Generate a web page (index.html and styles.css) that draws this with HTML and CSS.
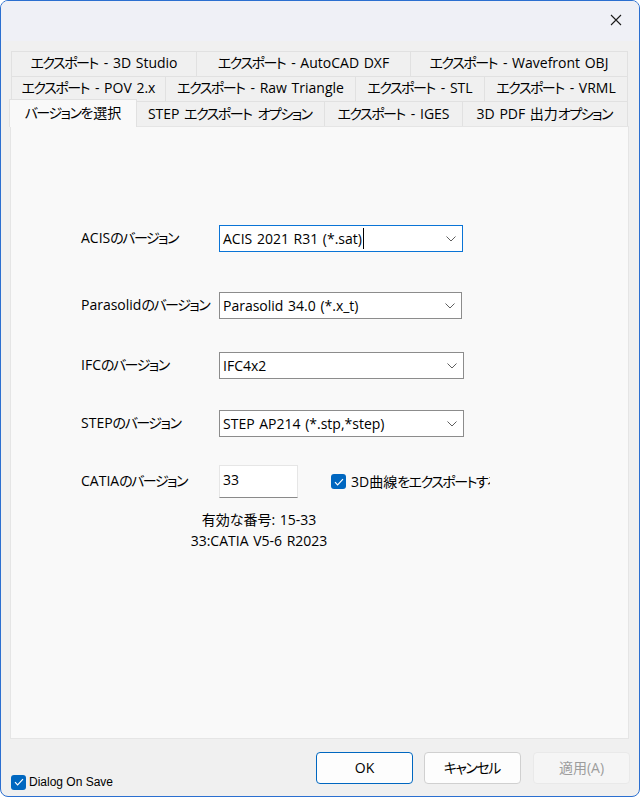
FILE: index.html
```html
<!DOCTYPE html>
<html lang="ja">
<head>
<meta charset="utf-8">
<title>エクスポート</title>
<link rel="stylesheet" href="styles.css">
</head>
<body>
<div class="window">
  <div class="titlebar">
    <div class="close">
      <svg width="12" height="12" viewBox="0 0 12 12"><path d="M1 1L11 11M11 1L1 11" stroke="#1b1b1b" stroke-width="1.1" fill="none"/></svg>
    </div>
  </div>

  <div class="tabs">
    <div class="tabrow r1">
      <div class="tab"><span><span class="kana">エクスポート</span> - 3D Studio</span></div>
      <div class="tab"><span><span class="kana">エクスポート</span> - AutoCAD DXF</span></div>
      <div class="tab"><span><span class="kana">エクスポート</span> - Wavefront OBJ</span></div>
    </div>
    <div class="tabrow r2">
      <div class="tab"><span><span class="kana">エクスポート</span> - POV 2.x</span></div>
      <div class="tab"><span><span class="kana">エクスポート</span> - Raw Triangle</span></div>
      <div class="tab"><span><span class="kana">エクスポート</span> - STL</span></div>
      <div class="tab"><span><span class="kana">エクスポート</span> - VRML</span></div>
    </div>
    <div class="tabrow r3">
      <div class="tab selected"><span><span class="kana">バージョンを</span>選択</span></div>
      <div class="tab"><span>STEP <span class="kana">エクスポート</span> <span class="kana">オプション</span></span></div>
      <div class="tab"><span><span class="kana">エクスポート</span> - IGES</span></div>
      <div class="tab"><span>3D PDF 出力<span class="kana">オプション</span></span></div>
    </div>
  </div>

  <div class="panel">
    <div class="form">
      <div class="row row-acis">
        <div class="lbl">ACIS<span class="kana">のバージョン</span></div>
        <div class="combo focused">
          <span class="val">ACIS 2021 R31 (*.sat)<span class="caret"></span></span>
          <svg class="chev" width="10" height="6" viewBox="0 0 10 6"><path d="M0.5 0.5L5 5L9.5 0.5" stroke="#5f5f5f" stroke-width="1" fill="none"/></svg>
        </div>
      </div>
      <div class="row row-parasolid">
        <div class="lbl">Parasolid<span class="kana">のバージョン</span></div>
        <div class="combo w243">
          <span class="val">Parasolid 34.0 (*.x_t)</span>
          <svg class="chev" width="10" height="6" viewBox="0 0 10 6"><path d="M0.5 0.5L5 5L9.5 0.5" stroke="#5f5f5f" stroke-width="1" fill="none"/></svg>
        </div>
      </div>
      <div class="row row-ifc">
        <div class="lbl">IFC<span class="kana">のバージョン</span></div>
        <div class="combo w245">
          <span class="val">IFC4x2</span>
          <svg class="chev" width="10" height="6" viewBox="0 0 10 6"><path d="M0.5 0.5L5 5L9.5 0.5" stroke="#5f5f5f" stroke-width="1" fill="none"/></svg>
        </div>
      </div>
      <div class="row row-step">
        <div class="lbl">STEP<span class="kana">のバージョン</span></div>
        <div class="combo w245">
          <span class="val">STEP AP214 (*.stp,*step)</span>
          <svg class="chev" width="10" height="6" viewBox="0 0 10 6"><path d="M0.5 0.5L5 5L9.5 0.5" stroke="#5f5f5f" stroke-width="1" fill="none"/></svg>
        </div>
      </div>
      <div class="row row-catia">
        <div class="lbl">CATIA<span class="kana">のバージョン</span></div>
        <div class="textbox">33</div>
        <div class="check">
          <svg width="10" height="8" viewBox="0 0 10 8"><path d="M1 4.2L3.6 6.8L9 1.2" stroke="#fff" stroke-width="1.2" fill="none"/></svg>
        </div>
        <div class="check-label">3D曲線<span class="kana">をエクスポートする</span></div>
      </div>
      <div class="hint">
        <div>有効<span class="kana">な</span>番号: 15-33</div>
        <div>33:CATIA V5-6 R2023</div>
      </div>
    </div>
  </div>

  <div class="footer">
    <div class="save-opt">
      <div class="check">
        <svg width="10" height="8" viewBox="0 0 10 8"><path d="M1 4.2L3.6 6.8L9 1.2" stroke="#fff" stroke-width="1.2" fill="none"/></svg>
      </div>
      <span class="save-label">Dialog On Save</span>
    </div>
    <div class="buttons">
      <div class="btn default">OK</div>
      <div class="btn"><span class="kana">キャンセル</span></div>
      <div class="btn disabled">適用(A)</div>
    </div>
  </div>
</div>
</body>
</html>
```

FILE: styles.css
```css
* { box-sizing: border-box; }
html, body { margin: 0; padding: 0; }
body {
  width: 640px;
  height: 797px;
  background: #ffffff;
  font-family: "Open Sans", "Noto Sans CJK JP", sans-serif;
  font-size: 14px;
  line-height: 18px;
  word-spacing: 1px;
  color: #000;
  font-feature-settings: "palt" 1;
}
.kana {
  letter-spacing: -1.5px;
  margin-right: 1.5px;
}

.window {
  width: 640px;
  height: 797px;
  border: 1px solid #2b6fd0;
  border-radius: 8px;
  background: #f0f0f0;
  display: flex;
  flex-direction: column;
  overflow: hidden;
}

.titlebar {
  height: 40px;
  flex: none;
  background: #eff0f6;
  display: flex;
  justify-content: flex-end;
}
.close {
  width: 46px;
  height: 37px;
  display: flex;
  align-items: center;
  justify-content: center;
}

/* tabs */
.tabs {
  margin: 10px 10px 0 10px;
  flex: none;
}
.tabrow {
  display: grid;
  height: 25px;
}
.r1 { grid-template-columns: 186px 214px 217px; }
.r2 { grid-template-columns: 155px 190px 129px 143px; }
.r3 { grid-template-columns: 128px 188px 138px 165px; margin-left: -2px; }

.tab {
  border-top: 1px solid #e1e1e1;
  border-right: 1px solid #e1e1e1;
  background: #f0f0f0;
  display: flex;
  align-items: center;
  justify-content: center;
  white-space: nowrap;
  padding-bottom: 2px;
}
.tab:first-child { border-left: 1px solid #e1e1e1; }
.r3 .tab:nth-child(2) { border-left: none; }
.tab.selected {
  align-self: start;
  height: 28px;
  margin-top: -2px;
  background: #f9f9f9;
  border: 1px solid #e1e1e1;
  border-bottom: none;
  position: relative;
  z-index: 1;
}

/* panel */
.panel {
  margin: 0 10px 0 9px;
  height: 613px;
  flex: none;
  background: #f9f9f9;
  border: 1px solid #e5e5e5;
  padding: 98px 0 0 70px;
}
.row {
  display: flex;
  align-items: center;
}
.row-parasolid { margin-top: 40px; }
.row-ifc { margin-top: 33px; }
.row-step { margin-top: 31px; }
.row-catia { margin-top: 28px; }

.lbl {
  width: 138px;
  flex: none;
  white-space: nowrap;
  padding-bottom: 1px;
}
.combo {
  width: 244px;
  height: 27px;
  background: #fff;
  border: 1px solid #8c8c8c;
  display: flex;
  align-items: center;
  justify-content: space-between;
  padding: 0 6px 0 3px;
  white-space: nowrap;
}
.combo.w243 { width: 243px; }
.combo.w245 { width: 245px; }
.combo.focused { border-color: #0a74d6; }
.val { display: flex; align-items: center; }
.caret {
  display: inline-block;
  width: 1px;
  height: 21px;
  background: #000;
  margin-left: 1px;
}
.chev { flex: none; }

.textbox {
  width: 79px;
  height: 33px;
  background: #fff;
  border: 1px solid #e6e6e6;
  border-bottom-color: #8a8a8a;
  padding: 5px 0 0 3px;
}
.check {
  width: 15px;
  height: 15px;
  border-radius: 3px;
  background: #0067c0;
  display: flex;
  align-items: center;
  justify-content: center;
  flex: none;
}
.row-catia .check { margin-left: 33px; }
.check-label {
  margin-left: 5px;
  width: 139px;
  overflow: hidden;
  white-space: nowrap;
}

.hint {
  margin: 11px 0 0 78px;
  width: 200px;
  text-align: center;
  line-height: 21px;
}

/* footer */
.footer {
  flex: 1;
  display: flex;
  align-items: flex-start;
  padding: 13px 9px 0 10px;
}
.save-opt {
  margin-top: 21px;
  display: flex;
  align-items: center;
}
.save-label {
  margin-left: 3px;
  font-size: 12px;
  font-family: "Liberation Sans", sans-serif;
  word-spacing: 0;
}
.buttons {
  margin-left: auto;
  display: flex;
  gap: 11px;
}
.btn {
  width: 97px;
  height: 32px;
  border: 1px solid #d0d0d0;
  border-radius: 4px;
  background: #fdfdfd;
  display: flex;
  align-items: center;
  justify-content: center;
}
.btn.default { border-color: #0067c0; }
.btn.disabled {
  margin-left: 1px;
  background: #f5f5f5;
  border-color: #e9e9e9;
  color: #9d9d9d;
}
```
